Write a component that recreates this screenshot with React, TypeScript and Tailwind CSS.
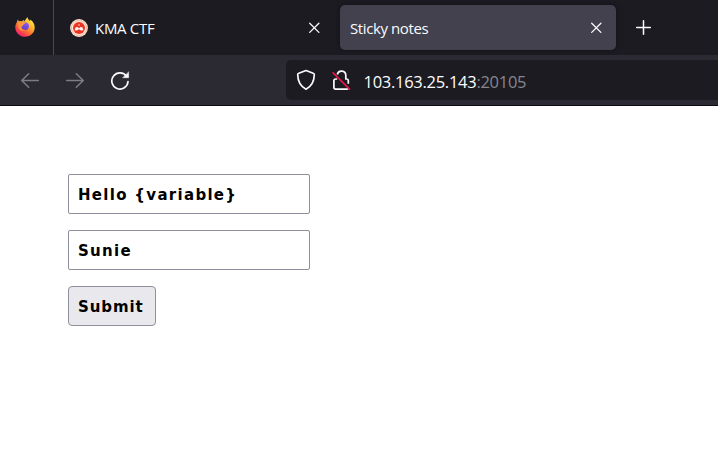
import React from "react";

function FirefoxLogo() {
  return (
    <svg width="20" height="20" viewBox="0 0 20 20">
      <defs>
        <linearGradient id="flame" x1="0.85" y1="0.05" x2="0.2" y2="0.95">
          <stop offset="0" stopColor="#fff44f" />
          <stop offset="0.35" stopColor="#ffb52b" />
          <stop offset="0.65" stopColor="#ff6a35" />
          <stop offset="1" stopColor="#f5156c" />
        </linearGradient>
        <linearGradient id="globe" x1="0.7" y1="0" x2="0.3" y2="1">
          <stop offset="0" stopColor="#9059ff" />
          <stop offset="1" stopColor="#5b3fc4" />
        </linearGradient>
      </defs>
      <path fill="url(#flame)" d="M12.3 0c.4 2 1.6 2.8 2.7 4 .3-.2.2-.9.1-1.4 3 1.8 4.6 4.8 4.6 7.9 0 5.2-4.3 9.3-9.6 9.3S.3 15.7.3 10.4c0-2.3.7-3.9 1.6-5.1 0-1 .3-2 1.1-2.8l.8 2c1-.5 2.2-.5 3.2-.1.6-.9 1.5-1.5 2.4-1.7-.6.7-.7 1.4-.6 2 1.1-.7 2.3-2.6 3.5-4.7Z" />
      <circle cx="10.2" cy="9.3" r="3.7" fill="url(#globe)" />
      <path fill="#ff9640" d="M3.2 5.5c1.4-.8 3-.6 4.3.2l2.8.2c-.2 1.1-1.7 1.2-2.1 1.8 0 1.2-1.2 1.2-2 2-.3 2 1.7 3.7 4 3-2.3 2.2-6.2.4-7-2.5Z" />
    </svg>
  );
}

function SiteBadge() {
  return (
    <svg width="18" height="18" viewBox="0 0 18 18">
      <circle cx="9" cy="9" r="8.9" fill="#ffe9d8" />
      <circle cx="9" cy="9" r="7.6" fill="none" stroke="#f9a68f" strokeWidth="0.8" />
      <circle cx="9" cy="9" r="6" fill="#ed3324" />
      <path fill="#fff4ec" d="M5.6 8.3 7.4 8 9 9.2 10.6 8l1.8.3 1 3-2.2.1L9 10.2l-2.2 1.2-2.2-.1Z" />
      <circle cx="9" cy="6" r="1" fill="#ff9a77" />
    </svg>
  );
}

function CloseIcon() {
  return (
    <svg width="12" height="12" viewBox="0 0 12 12" fill="none" stroke="#fbfbfe" strokeWidth="1.3" strokeLinecap="round">
      <path d="m1.7 1.2 9.2 9.2M10.9 1.2 1.7 10.4" />
    </svg>
  );
}

function Arrow({ forward = false }: { forward?: boolean }) {
  return (
    <svg width="20" height="18" viewBox="0 0 20 18" fill="none" stroke="#7e7d84" strokeWidth="1.5" strokeLinecap="round" strokeLinejoin="round">
      <path d={forward ? "M1.7 9.5h16.6M11.3 2.8l7 6.7-7 6.7" : "M18.3 9.5H1.7M8.7 2.8l-7 6.7 7 6.7"} />
    </svg>
  );
}

function Toolbar() {
  return (
    <div className="flex h-[51px] items-center border-b border-[#0c0c0d] bg-[#2b2a33] pl-5">
      <Arrow />
      <div className="ml-[25px]"><Arrow forward /></div>
      <svg className="ml-[25px]" width="20" height="20" viewBox="0 0 20 20" fill="none" stroke="#fbfbfe" strokeWidth="1.7" strokeLinecap="round">
        <path d="M16.6 6.4A8.1 8.1 0 1 0 18 11.5" />
        <path d="M18.6 2.2v5.5h-5.7Z" fill="#fbfbfe" strokeWidth="0.5" strokeLinejoin="round" />
      </svg>
      <div className="ml-[156px] flex h-10 flex-1 items-center rounded-l-[5px] bg-[#1c1b22] pl-[10px]">
        <svg width="20" height="22" viewBox="0 0 20 22" fill="none" stroke="#fbfbfe" strokeWidth="1.7" strokeLinejoin="round">
          <path d="M10 1.5 17.2 4.2q1.2.4 1.1 1.6c-.2 6.7-2.4 11.5-8.3 14.4C4.1 17.3 1.9 12.5 1.7 5.8 1.6 4.6 2 4.4 2.8 4.2Z" />
        </svg>
        <svg className="ml-4" width="20" height="22" viewBox="0 0 20 22" fill="none" strokeWidth="1.7">
          <path stroke="#fbfbfe" strokeLinejoin="round" d="M5.3 5.5a4.3 4.3 0 0 1 8.5.8V10h.7q1.8 0 1.8 1.7v3M5.2 10H3.8q-1.9 0-1.9 1.7v6.6q0 1.8 1.8 1.8h10.8q1.2 0 1.6-.5" />
          <path stroke="#e6174a" strokeLinecap="round" d="m1.1 3.8 16.4 16.3" />
        </svg>
        <span className="ml-[11.5px] mt-[3px] whitespace-nowrap text-[16.5px] leading-[24px] tracking-[-0.28px] text-[#fbfbfe]">
          103.163.25.143<span className="text-[#87868e]">:20105</span>
        </span>
      </div>
    </div>
  );
}

export default function App() {
  return (
    <div className="h-[465px] w-[718px] overflow-hidden bg-white font-['Open_Sans','Noto_Sans',sans-serif]">
      <header>
        <div className="flex h-[55px] items-center bg-[#1c1b22]">
          <div className="flex h-full w-[54px] items-center border-r border-[#4a4950] pl-[15px] pb-px">
            <FirefoxLogo />
          </div>
          <div className="flex h-[45px] w-[286px] items-center pl-4 pr-[20px]">
            <SiteBadge />
            <span className="ml-[7px] flex-1 text-[15px] leading-5 tracking-[-0.3px] text-[#fbfbfe]">KMA CTF</span>
            <CloseIcon />
          </div>
          <div className="flex h-[45px] w-[276px] items-center rounded-[5px] bg-[#42414d] pl-[10px] pr-[14px] shadow-[0_0_4px_#101015]">
            <span className="flex-1 text-[15px] leading-5 tracking-[-0.4px] text-[#fbfbfe]">Sticky notes</span>
            <CloseIcon />
          </div>
          <svg className="ml-[19px]" width="17" height="17" viewBox="0 0 17 17" fill="none" stroke="#fbfbfe" strokeWidth="1.5" strokeLinecap="round">
            <path d="M8.5 1.7v13.6M1.7 8.5h13.6" />
          </svg>
        </div>
        <Toolbar />
      </header>
      <form
        className="flex flex-col items-start gap-4 pl-[68px] pt-[68px] font-['DejaVu_Sans',sans-serif] text-[15px] font-bold text-black"
        onSubmit={(e) => e.preventDefault()}
      >
        <input className="h-10 w-[242px] rounded-[2px] border border-[#8f8f9d] bg-white px-[9px] pt-[2px] tracking-[1.3px]" defaultValue="Hello {variable}" />
        <input className="h-10 w-[242px] rounded-[2px] border border-[#8f8f9d] bg-white px-[9px] pt-[2px] tracking-[1.3px]" defaultValue="Sunie" />
        <button className="h-10 w-[88px] rounded-[4px] border border-[#8f8f9d] bg-[#e9e9ed] pl-[9px] pt-[3px] text-left tracking-[0.9px]" type="submit">Submit</button>
      </form>
    </div>
  );
}
